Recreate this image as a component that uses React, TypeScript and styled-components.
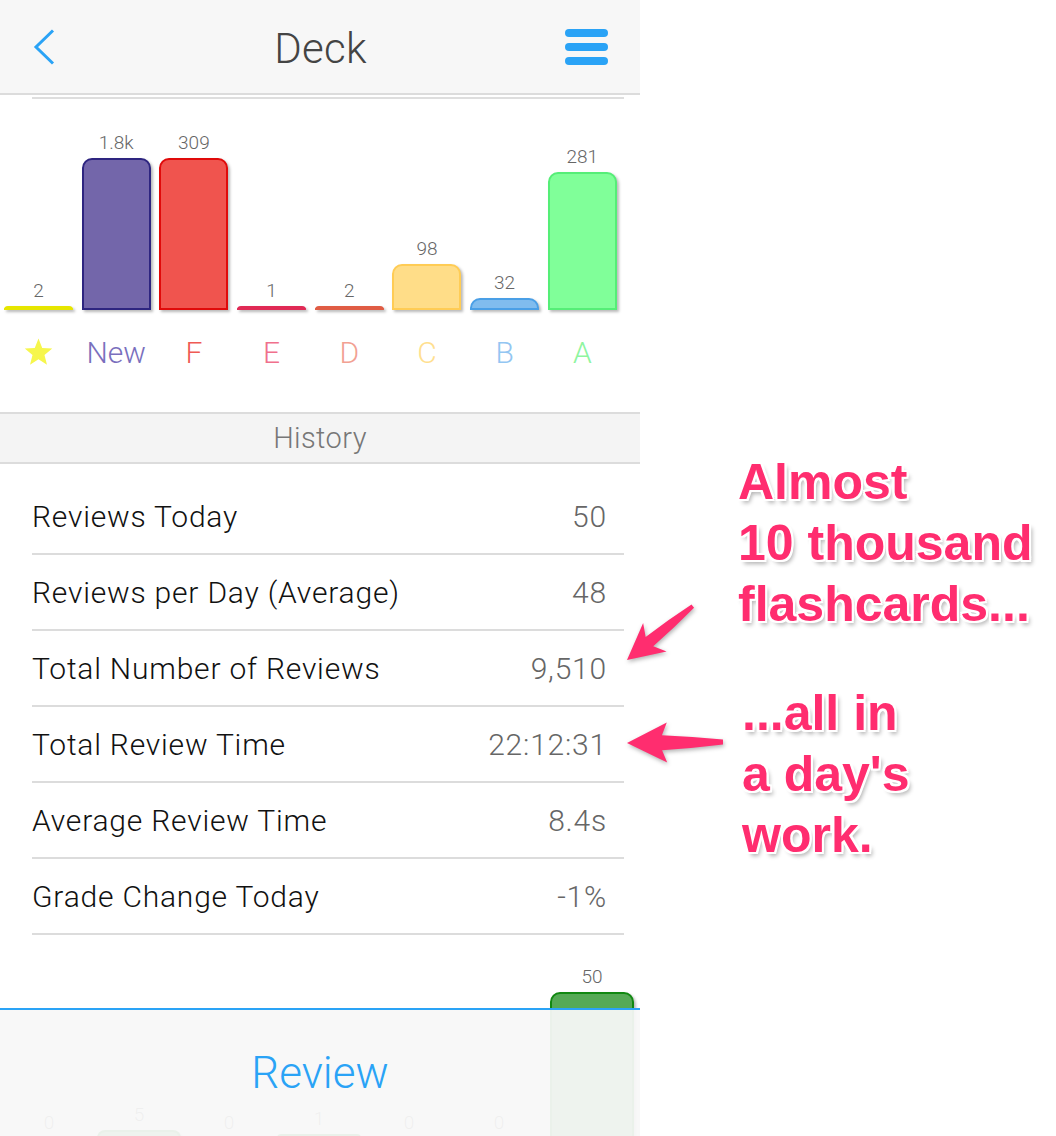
import React, { FC } from 'react';
import styled, { createGlobalStyle } from 'styled-components';

const THIN = '"Roboto", "Liberation Sans", sans-serif';
const BLUE = '#2aa3f6';
const PINK = '#ff2d6f';

const GlobalStyle = createGlobalStyle`
  html, body {
    margin: 0;
    padding: 0;
    background: #fff;
  }
  body {
    font-family: ${THIN};
  }
`;

const Page = styled.div`
  position: relative;
  display: flex;
  width: 1056px;
  height: 1136px;
  overflow: hidden;
  background: #fff;
`;

const Phone = styled.div`
  position: relative;
  flex: none;
  width: 640px;
  height: 1136px;
  overflow: hidden;
  display: flex;
  flex-direction: column;
`;

const NavBar = styled.header`
  flex: none;
  height: 93px;
  display: grid;
  grid-template-columns: 1fr auto 1fr;
  align-items: center;
  padding: 0 32px 0 33px;
  background: #f7f7f7;
  border-bottom: 2px solid #dcdcdc;
`;

const NavTitle = styled.h1`
  margin: 4px 0 0;
  font-family: ${THIN};
  font-weight: 300;
  font-size: 42px;
  letter-spacing: 0.3px;
  color: #444;
`;

const BackButton = styled.svg`
  justify-self: start;
  display: block;
`;

const MenuButton = styled.div`
  justify-self: end;
  display: flex;
  flex-direction: column;
  gap: 6px;
`;

const MenuBar = styled.span`
  display: block;
  width: 43px;
  height: 8px;
  border-radius: 4px;
  background: ${BLUE};
`;

const Divider = styled.div`
  flex: none;
  height: 2px;
  margin: 2px 16px 0 32px;
  background: #dedede;
`;

const Chart = styled.div<{ $columns: string; $height: number }>`
  flex: none;
  display: grid;
  grid-template-columns: ${(p) => p.$columns};
  padding-left: 4px;
  height: ${(p) => p.$height}px;
`;

const ChartColumn = styled.div<{ $width: number; $centered?: boolean }>`
  display: flex;
  flex-direction: column;
  justify-content: flex-end;
  align-items: center;
  width: ${(p) => p.$width}px;
  justify-self: ${(p) => (p.$centered ? 'center' : 'start')};
`;

const ValueLabel = styled.div`
  font-family: ${THIN};
  font-weight: 300;
  font-size: 19px;
  line-height: 20px;
  color: #666;
  text-align: center;
  margin-bottom: 5px;
`;

const Bar = styled.div<{ $fill: string; $edge: string }>`
  box-sizing: border-box;
  width: 100%;
  background: ${(p) => p.$fill};
  border: 2px solid ${(p) => p.$edge};
  border-radius: 10px 10px 0 0;
  box-shadow: 2px 2px 3px rgba(0, 0, 0, 0.28);
`;

const Legend = styled.div`
  flex: none;
  display: grid;
  grid-template-columns: repeat(8, 77.7px);
  padding: 24px 0 42px 4px;
`;

const LegendItem = styled.div<{ $color: string }>`
  width: 69px;
  height: 36px;
  display: flex;
  align-items: center;
  justify-content: center;
  font-family: ${THIN};
  font-weight: 300;
  font-size: 30px;
  color: ${(p) => p.$color};
`;

const SectionHeader = styled.div`
  flex: none;
  height: 48px;
  display: flex;
  align-items: center;
  justify-content: center;
  background: #f4f4f4;
  border-top: 2px solid #dcdcdc;
  border-bottom: 2px solid #dcdcdc;
  font-family: ${THIN};
  font-weight: 300;
  font-size: 29px;
  letter-spacing: 0.4px;
  color: #777;
`;

const StatList = styled.div`
  flex: none;
  padding: 15px 16px 0 32px;
`;

const StatRow = styled.div`
  height: 74px;
  display: flex;
  align-items: center;
  justify-content: space-between;
  padding-right: 17px;
  border-bottom: 2px solid #dcdcdc;
  font-family: ${THIN};
  font-weight: 300;
  font-size: 30px;
  letter-spacing: 0.8px;
`;

const StatLabel = styled.span`
  color: #111;
`;

const StatValue = styled.span`
  color: #666;
`;

const Footer = styled.div`
  position: absolute;
  left: 0;
  right: 0;
  bottom: 0;
  height: 126px;
  display: flex;
  align-items: center;
  justify-content: center;
  background: rgba(248, 248, 248, 0.94);
  border-top: 2px solid ${BLUE};
  font-family: ${THIN};
  font-weight: 300;
  font-size: 44px;
  color: ${BLUE};
`;

const Notes = styled.div`
  flex: 1;
  display: flex;
  flex-direction: column;
  padding: 452px 0 0 98px;
`;

const Note = styled.div<{ $shift?: number }>`
  margin-left: ${(p) => p.$shift ?? 0}px;
  font-family: "Liberation Sans", Arial, sans-serif;
  font-weight: 700;
  font-size: 50px;
  line-height: 61px;
  color: ${PINK};
  white-space: nowrap;
  text-shadow:
    2px 0 0 #fff, -2px 0 0 #fff, 0 2px 0 #fff, 0 -2px 0 #fff,
    2px 2px 0 #fff, -2px -2px 0 #fff, 2px -2px 0 #fff, -2px 2px 0 #fff,
    3px 4px 4px rgba(0, 0, 0, 0.3);

  & + & {
    margin-top: 48px;
  }
`;

const ArrowLayer = styled.svg`
  position: absolute;
  left: 600px;
  top: 580px;
  overflow: visible;
  pointer-events: none;
  filter: drop-shadow(1px 2px 2px rgba(0, 0, 0, 0.3));
`;

interface GradeBar {
  key: string;
  value: string;
  height: number;
  fill: string;
  edge: string;
  text: string;
}

const grades: GradeBar[] = [
  { key: 'star', value: '2', height: 4, fill: '#f2f200', edge: '#e6e600', text: '#f6f64c' },
  { key: 'New', value: '1.8k', height: 152, fill: '#7366aa', edge: '#2e2580', text: '#7a6fbd' },
  { key: 'F', value: '309', height: 152, fill: '#f0544e', edge: '#e00a0a', text: '#ef5a55' },
  { key: 'E', value: '1', height: 4, fill: '#ea3a60', edge: '#e02a55', text: '#f0708c' },
  { key: 'D', value: '2', height: 4, fill: '#ea6c52', edge: '#e05c44', text: '#f2a193' },
  { key: 'C', value: '98', height: 46, fill: '#ffdd88', edge: '#ffcc55', text: '#ffe08f' },
  { key: 'B', value: '32', height: 12, fill: '#80bcee', edge: '#4a9fe6', text: '#93c6f2' },
  { key: 'A', value: '281', height: 138, fill: '#80ff99', edge: '#55ee77', text: '#8ef5a0' },
];

const stats: [string, string][] = [
  ['Reviews Today', '50'],
  ['Reviews per Day (Average)', '48'],
  ['Total Number of Reviews', '9,510'],
  ['Total Review Time', '22:12:31'],
  ['Average Review Time', '8.4s'],
  ['Grade Change Today', '-1%'],
];

const recent: [string, number][] = [
  ['0', 0], ['5', 8], ['0', 0], ['1', 2], ['0', 0], ['0', 0], ['50', 146],
];

const Star: FC = () => (
  <svg width="31" height="31" viewBox="0 0 30 30">
    <polygon
      points="15,1.5 18.6,10.6 28.3,11.2 20.8,17.4 23.2,26.9 15,21.6 6.8,26.9 9.2,17.4 1.7,11.2 11.4,10.6"
      fill="#f6f64c"
    />
  </svg>
);

interface ArrowProps {
  x: number;
  y: number;
  angle: number;
  length: number;
  head: number;
  barb: number;
  neck: number;
  neckWidth: number;
  tail: number;
}

const Arrow: FC<ArrowProps> = ({ x, y, angle, length, head, barb, neck, neckWidth, tail }) => (
  <path
    transform={`translate(${x} ${y}) rotate(${angle})`}
    fill={PINK}
    d={`M0 0 L${head} ${-barb} L${neck} ${-neckWidth} Q${(neck + length) / 2} ${-(neckWidth + tail) / 2 - 1} ${length} ${-tail}
       L${length} ${tail} Q${(neck + length) / 2} ${(neckWidth + tail) / 2 + 1} ${neck} ${neckWidth} L${head} ${barb} Z`}
  />
);

const App: FC = () => (
  <Page>
    <GlobalStyle />
    <Phone>
      <NavBar>
        <BackButton width="22" height="36" viewBox="0 0 22 36">
          <polyline points="20,1.5 3,18 20,34.5" fill="none" stroke={BLUE} strokeWidth="3" />
        </BackButton>
        <NavTitle>Deck</NavTitle>
        <MenuButton>
          <MenuBar />
          <MenuBar />
          <MenuBar />
        </MenuButton>
      </NavBar>
      <Divider />

      <Chart $columns="repeat(8, 77.7px)" $height={211}>
        {grades.map((g) => (
          <ChartColumn key={g.key} $width={69}>
            <ValueLabel>{g.value}</ValueLabel>
            <Bar $fill={g.fill} $edge={g.edge} style={{ height: g.height }} />
          </ChartColumn>
        ))}
      </Chart>
      <Legend>
        {grades.map((g) => (
          <LegendItem key={g.key} $color={g.text}>
            {g.key === 'star' ? <Star /> : g.key}
          </LegendItem>
        ))}
      </Legend>

      <SectionHeader>History</SectionHeader>
      <StatList>
        {stats.map(([label, value]) => (
          <StatRow key={label}>
            <StatLabel>{label}</StatLabel>
            <StatValue>{value}</StatValue>
          </StatRow>
        ))}
      </StatList>

      <Chart $columns="repeat(6, 90px) 96px" $height={203}>
        {recent.map(([value, height], i) => (
          <ChartColumn key={i} $width={84} $centered>
            <ValueLabel>{value}</ValueLabel>
            {height > 0 && <Bar $fill="#55aa55" $edge="#118811" style={{ height }} />}
          </ChartColumn>
        ))}
      </Chart>

      <Footer>Review</Footer>
    </Phone>

    <Notes>
      <Note>Almost<br />10 thousand<br />flashcards...</Note>
      <Note $shift={4}>...all in<br />a day's<br />work.</Note>
    </Notes>

    <ArrowLayer width="140" height="200">
      <Arrow x={27} y={80} angle={-39.3} length={85} head={36} barb={18.5} neck={29} neckWidth={6} tail={2} />
      <Arrow x={27} y={163} angle={-0.6} length={96} head={40} barb={20} neck={35} neckWidth={7.5} tail={2.5} />
    </ArrowLayer>
  </Page>
);

export default App;
